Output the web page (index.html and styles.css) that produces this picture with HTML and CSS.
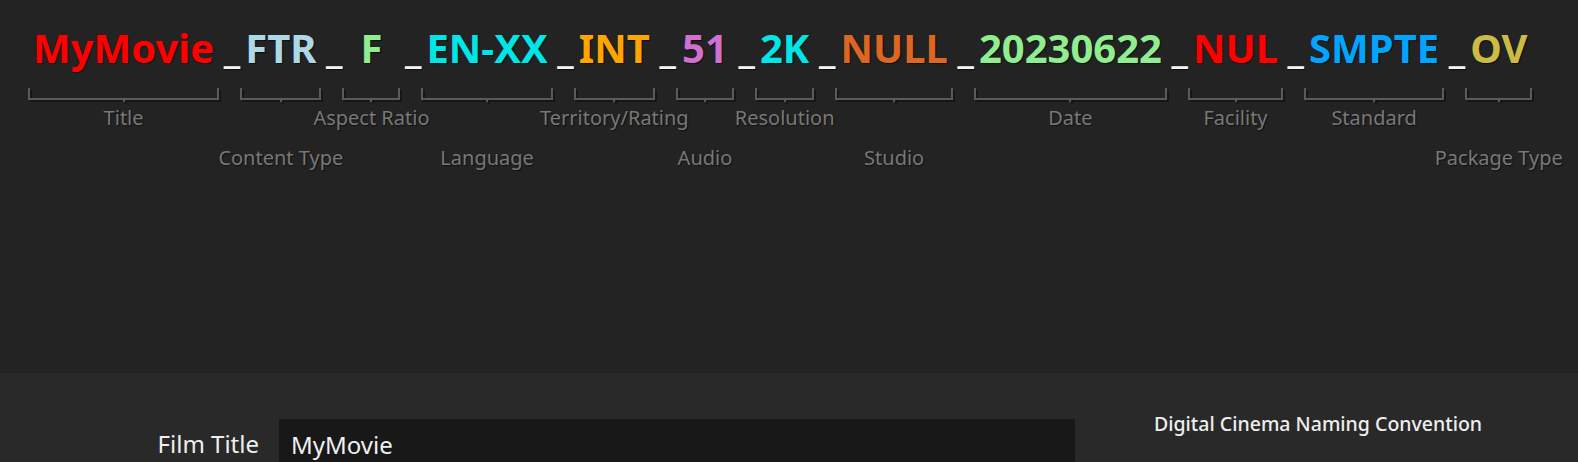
FILE: index.html
```html
<html lang="en">
<head>
    <meta charset="UTF-8">
    <meta name="viewport" content="width=device-width, initial-scale=1.0">
    <title>DCNC</title>

    <link rel="stylesheet" href="styles.css">
</head>
<body>

    <section class="preview">
        <div class="name">
            <div class="part">
                <span class="token red">MyMovie</span>
                <div class="brace"></div>
                <div class="label">Title</div>
            </div>
            <div class="sep">_</div>
            <div class="part">
                <span class="token lightblue">FTR</span>
                <div class="brace"></div>
                <div class="label low">Content Type</div>
            </div>
            <div class="sep">_</div>
            <div class="part">
                <span class="token lightgreen">F</span>
                <div class="brace"></div>
                <div class="label">Aspect Ratio</div>
            </div>
            <div class="sep">_</div>
            <div class="part">
                <span class="token cyan">EN-XX</span>
                <div class="brace"></div>
                <div class="label low">Language</div>
            </div>
            <div class="sep">_</div>
            <div class="part">
                <span class="token orange">INT</span>
                <div class="brace"></div>
                <div class="label">Territory/Rating</div>
            </div>
            <div class="sep">_</div>
            <div class="part">
                <span class="token orchid">51</span>
                <div class="brace"></div>
                <div class="label low">Audio</div>
            </div>
            <div class="sep">_</div>
            <div class="part">
                <span class="token cyan">2K</span>
                <div class="brace"></div>
                <div class="label">Resolution</div>
            </div>
            <div class="sep">_</div>
            <div class="part">
                <span class="token chocolate">NULL</span>
                <div class="brace"></div>
                <div class="label low">Studio</div>
            </div>
            <div class="sep">_</div>
            <div class="part">
                <span class="token lightgreen">20230622</span>
                <div class="brace"></div>
                <div class="label">Date</div>
            </div>
            <div class="sep">_</div>
            <div class="part">
                <span class="token red">NUL</span>
                <div class="brace"></div>
                <div class="label">Facility</div>
            </div>
            <div class="sep">_</div>
            <div class="part">
                <span class="token blue">SMPTE</span>
                <div class="brace"></div>
                <div class="label">Standard</div>
            </div>
            <div class="sep">_</div>
            <div class="part">
                <span class="token khaki">OV</span>
                <div class="brace"></div>
                <div class="label low">Package Type</div>
            </div>
        </div>
    </section>

    <section class="panel">
        <div class="form">
            <label class="field-label" for="film-title">Film Title</label>
            <input class="field" id="film-title" type="text" value="MyMovie">
            <h2 class="panel-title">Digital Cinema Naming Convention</h2>
        </div>
    </section>

</body>
</html>
```

FILE: styles.css
```css
html,
body {
  margin: 0;
  height: 100%;
  overflow: hidden;
  background-color: #232323;
  font-family: "Noto Sans", "Open Sans", sans-serif;
}

.preview {
  height: 373px;
  border-bottom: 1px solid #1e1e1e;
  box-sizing: border-box;
  padding: 24px 0 0 28px;
}

.name {
  display: flex;
  align-items: flex-start;
}

.part {
  display: flex;
  flex-direction: column;
  align-items: center;
  min-width: 58px;
}

.token,
.sep {
  font-size: 40px;
  font-weight: 700;
  line-height: 48px;
  white-space: nowrap;
  text-shadow: 1px 1px 1px rgba(0, 0, 0, .6);
}

.token {
  padding: 0 5px;
}

.sep {
  width: 21px;
  text-align: right;
  color: #f4f4f4;
}

.brace {
  position: relative;
  align-self: stretch;
  height: 10px;
  margin-top: 16px;
  border: 2px solid #5a5a5a;
  border-top: 0;
  filter: drop-shadow(2px 2px 0 rgba(0, 0, 0, .35));
}

.brace::after {
  content: "";
  position: absolute;
  left: 50%;
  bottom: -4px;
  width: 2px;
  height: 2px;
  margin-left: -1px;
  background: #5a5a5a;
}

.label {
  width: 0;
  display: flex;
  justify-content: center;
  margin-top: 6px;
  font-size: 20px;
  line-height: 24px;
  white-space: nowrap;
  color: #787878;
  text-shadow: 1px 1px 1px #111111;
}

.label.low {
  margin-top: 46px;
}

.red { color: #ff0000; }
.lightblue { color: #add8e6; }
.lightgreen { color: #90ee90; }
.cyan { color: #00e6e6; }
.orange { color: #ffa500; }
.orchid { color: #d070d0; }
.chocolate { color: #dd6622; }
.blue { color: #00a5ff; }
.khaki { color: #ccbb44; }

.panel {
  height: 100%;
  background-color: #292929;
  padding-top: 46px;
  box-sizing: border-box;
}

.form {
  display: grid;
  grid-template-columns: 259px 796px auto;
  column-gap: 20px;
  align-items: start;
}

.field-label {
  font-size: 24px;
  line-height: 50px;
  text-align: right;
  color: #eeeeee;
}

.field {
  height: 50px;
  margin: 0;
  padding: 0 12px;
  border: 0;
  outline: none;
  background: #181818;
  font-family: "Noto Sans", "Open Sans", sans-serif;
  font-size: 24px;
  color: #f0f0f0;
  box-sizing: border-box;
}

.panel-title {
  margin: -7px 0 0 59px;
  font-size: 19.5px;
  font-weight: 500;
  line-height: 24px;
  color: #eeeeee;
}
```
